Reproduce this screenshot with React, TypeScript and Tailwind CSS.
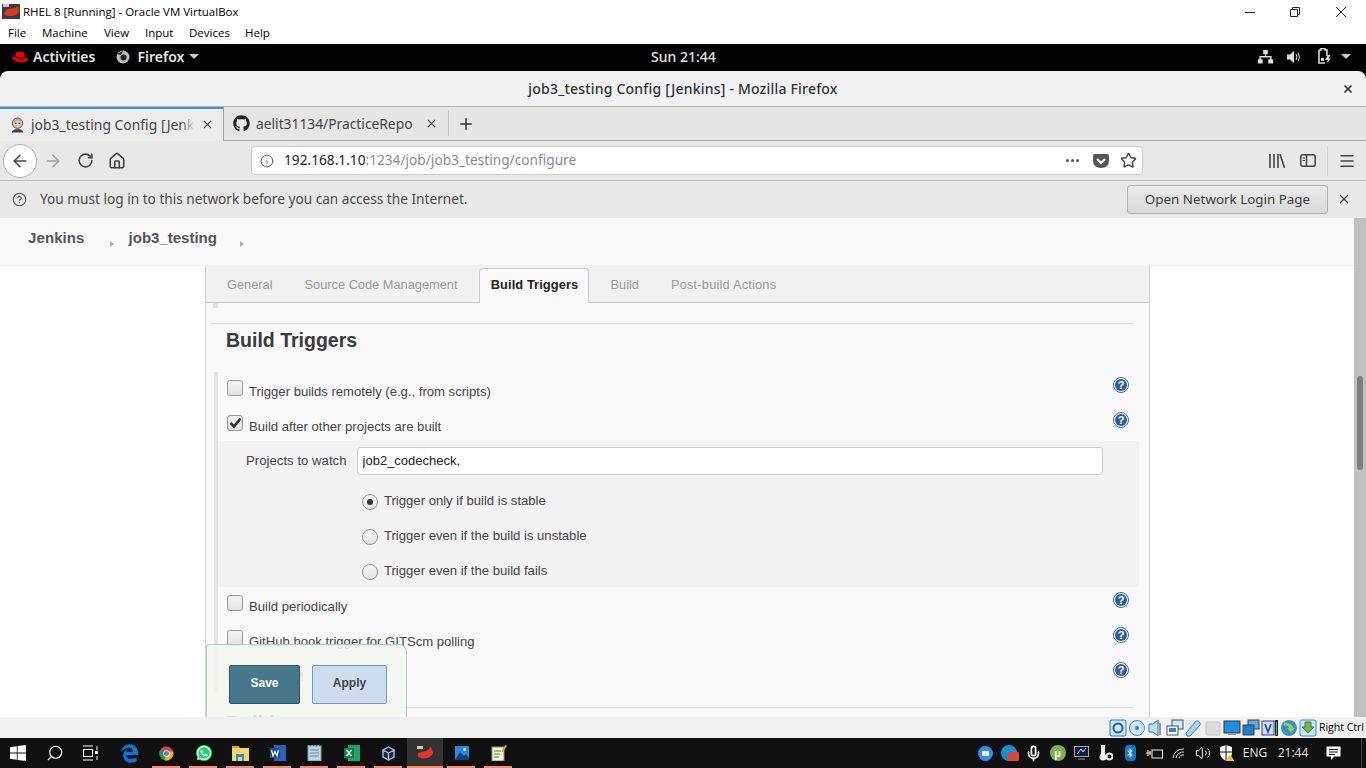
// App.tsx - VirtualBox window showing Jenkins job config in Firefox
import React from 'react';
import { FaGithub, FaWhatsapp, FaBluetoothB, FaEdgeLegacy } from 'react-icons/fa6';
import {
  ArrowLeft, ArrowRight, RotateCw, Home, Info, CircleHelp, X, Plus, Star, Menu,
  Search, Volume2, Mic,
} from 'lucide-react';

const uiFont = "font-['Noto_Sans',sans-serif]";
const winFont = "font-['Open_Sans',sans-serif]";
const pageFont = "font-['Liberation_Sans',sans-serif]";

const RedHat = ({ size = 16 }: { size?: number }) => (
  <svg width={size} height={size * 0.75} viewBox="0 0 16 12">
    <path d="M4 1.5 C5 0 7 1 8.5 1 C10 1 10.5 0.5 11.5 1 L13 6 C15 6.5 16 7.5 16 8.5 C16 10.5 13 11.5 9.5 11.5 C5 11.5 0 8.5 0 6.5 C0 5.5 1.5 5.5 3 6 Z" fill="#e00" />
    <path d="M3 6 C5 7.5 9 9 13 8 L13 6.5 C10 7 6 6.5 3.3 4.8 Z" fill="#200" />
  </svg>
);

const CheckBox = ({ checked = false }: { checked?: boolean }) => (
  <span className="w-[16px] h-[16px] rounded-[3px] border border-[#9a9a9a] bg-gradient-to-b from-[#f4f4f4] to-[#e2e2e2] flex items-center justify-center shrink-0">
    {checked && (
      <svg width="13" height="12" viewBox="0 0 13 12">
        <path d="M1.5 6 L5 9.5 L11.5 1.5" fill="none" stroke="#333" strokeWidth="2.6" />
      </svg>
    )}
  </span>
);

const Radio = ({ checked = false }: { checked?: boolean }) => (
  <span className="w-[16px] h-[16px] rounded-full border border-[#8f8f8f] bg-gradient-to-b from-[#f6f6f6] to-[#e4e4e4] flex items-center justify-center shrink-0">
    {checked && <span className="w-[6px] h-[6px] rounded-full bg-[#333]" />}
  </span>
);

const HelpDot = () => (
  <svg width="16" height="16" viewBox="0 0 16 16" className="shrink-0">
    <circle cx="8" cy="8" r="7.5" fill="#fff" stroke="#3465a4" />
    <circle cx="8" cy="8" r="6" fill="#2f5c9e" />
    <text x="8" y="12" textAnchor="middle" fontSize="11" fontWeight="700" fill="#fff">?</text>
  </svg>
);

// one checkbox row in the triggers list, 35px pitch
const TriggerRow = ({ label, checked }: { label: string; checked?: boolean }) => (
  <div className="h-[35px] flex items-start text-[13.1px] text-[#444]">
    <div className="ml-[9px] mt-[8px]"><CheckBox checked={checked} /></div>
    <span className="ml-[6px] mt-[12px] leading-[15px]">{label}</span>
    <div className="ml-auto mr-[2px] mt-[5px]"><HelpDot /></div>
  </div>
);

const RadioRow = ({ label, checked }: { label: string; checked?: boolean }) => (
  <div className="h-[35px] flex items-center text-[13.1px] text-[#444] ml-[144px]">
    <span className="mt-[2px]"><Radio checked={checked} /></span>
    <span className="ml-[6px]">{label}</span>
  </div>
);

const AppCell = ({ children }: { children: React.ReactNode }) => (
  <div className="w-[37px] h-[30px] flex items-center justify-center shrink-0 relative">
    {children}
    <span className="absolute bottom-0 left-[4px] right-[5px] h-[2px] bg-[#f48a70]" />
  </div>
);

// tray icons sit on an even pitch
const TrayCell = ({ children }: { children: React.ReactNode }) => (
  <div className="w-[24.2px] h-[30px] flex items-center justify-center shrink-0">{children}</div>
);

const VBoxIcon = ({ children }: { children: React.ReactNode }) => (
  <svg width="18" height="18" viewBox="0 0 18 18" className="shrink-0">{children}</svg>
);

export default function App() {
  return (
    <div className="w-[1366px] h-[768px] overflow-hidden flex flex-col bg-white relative">
      {/* VirtualBox title */}
      <div className={`h-[22px] pt-[1px] flex items-center bg-white text-[11.5px] text-black ${winFont}`}>
        <svg width="18" height="17" viewBox="0 0 18 17" className="ml-[2px]">
          <rect x="0" y="1" width="18" height="15" fill="#3b3b3b" />
          <rect x="1" y="1" width="6" height="3" fill="#ccc" />
          <path d="M4 7 C6 5 12 7 16 3 L17 9 C14 14 5 14 2 11 Z" fill="#e33524" />
        </svg>
        <span className="ml-[3px]">RHEL 8 [Running] - Oracle VM VirtualBox</span>
        <div className="ml-auto flex items-center">
          <svg width="10" height="10" viewBox="0 0 10 10" className="mr-[35px]"><path d="M0 5.5 H10" stroke="#222" /></svg>
          <svg width="10" height="10" viewBox="0 0 10 10" className="mr-[36px]">
            <path d="M2.5 2 V0.5 H9.5 V7.5 H7.5 M0.5 2.5 H7.5 V9.5 H0.5 Z" fill="none" stroke="#222" />
          </svg>
          <svg width="10" height="10" viewBox="0 0 10 10" className="mr-[20px]"><path d="M0 0 L10 10 M10 0 L0 10" stroke="#222" /></svg>
        </div>
      </div>
      {/* VirtualBox menu */}
      <div className={`h-[22px] flex items-center pl-[8px] bg-white text-[11.5px] text-black ${winFont}`}>
        <span className="w-[34px]">File</span>
        <span className="w-[62px]">Machine</span>
        <span className="w-[41px]">View</span>
        <span className="w-[44px]">Input</span>
        <span className="w-[56px]">Devices</span>
        <span>Help</span>
      </div>
      {/* GNOME top bar */}
      <div className={`h-[27px] pb-[2px] bg-black flex items-center relative text-[14px] font-semibold text-[#e6e6e6] ${uiFont}`}>
        <div className="ml-[12px]"><RedHat /></div>
        <span className="ml-[5px]">Activities</span>
        <svg width="14" height="14" viewBox="0 0 14 14" className="ml-[21px]">
          <circle cx="7" cy="7" r="6.5" fill="#bbb" />
          <circle cx="7.5" cy="7.5" r="3" fill="#222" />
          <path d="M1 4 L7 1 L5 5 Z" fill="#222" />
        </svg>
        <span className="ml-[7px]">Firefox</span>
        <span className="ml-[5px] w-0 h-0 border-l-[5px] border-r-[5px] border-t-[5px] border-l-transparent border-r-transparent border-t-[#ccc]" />
        <span className="absolute left-[651px] font-medium">Sun 21:44</span>
        <div className="ml-auto flex items-center pr-[15px]">
          <svg width="15" height="15" viewBox="0 0 16 16">
            <path d="M5.5 1 H10.5 V5.5 H8.5 V7.5 H14.5 V11 H16 V15.5 H11 V11 H13 V9 H3 V11 H5 V15.5 H0 V11 H1.5 V7.5 H7.5 V5.5 H5.5 Z" fill="#ddd" />
          </svg>
          <svg width="16" height="16" viewBox="0 0 16 16" className="ml-[13px]">
            <path d="M1 5.5 H4 L8 2 V14 L4 10.5 H1 Z" fill="#ddd" />
            <path d="M10 5 Q12 8 10 11 M12 3.5 Q15 8 12 12.5" fill="none" stroke="#ddd" />
          </svg>
          <svg width="16" height="17" viewBox="0 0 16 17" className="ml-[14px]">
            <path d="M3 2 H5 V0.5 H9 V2 H11 V8 M9 15 H3 V2" fill="none" stroke="#ddd" strokeWidth="1.6" />
            <path d="M5 10 H8 V13 H5 Z M12 7 L9 12 H12 L10 16 L15 10.5 H12.5 L14.5 7 Z" fill="#ddd" />
          </svg>
          <span className="ml-[9px] w-0 h-0 border-l-[5px] border-r-[5px] border-t-[5px] border-l-transparent border-r-transparent border-t-[#ccc]" />
        </div>
      </div>
      {/* Firefox title */}
      <div className="bg-black">
        <div className={`h-[36px] bg-[#f2f2f2] rounded-t-[8px] border-b border-[#b4b4b4] flex items-center justify-center relative text-[14px] font-medium text-[#2e3436] ${uiFont}`}>
          <span className="tracking-[0.2px]">job3_testing Config [Jenkins] - Mozilla Firefox</span>
          <X size={12} strokeWidth={3.5} className="absolute right-[12px] top-[12px] text-[#333]" />
        </div>
      </div>
      {/* Tab strip */}
      <div className={`h-[34px] bg-[#e6e6e5] flex items-stretch border-b border-[#a8a8a8] text-[13.8px] text-[#444] ${uiFont}`}>
        <div className="w-[224px] h-[34px] bg-[#ececec] border-t-2 border-[#3d8fe0] border-r border-r-[#a8a8a8] flex items-center relative">
          <svg width="15" height="17" viewBox="0 0 16 17" className="ml-[10px] shrink-0">
            <circle cx="8" cy="6" r="5.5" fill="#e8c4a8" stroke="#444" />
            <path d="M3 5 C4 0 12 0 13 5 C11 3 5 3 3 5 Z" fill="#aaa" />
            <circle cx="6" cy="6" r="0.8" fill="#333" /><circle cx="10" cy="6" r="0.8" fill="#333" />
            <path d="M2 16 C2 11 14 11 14 16 Z" fill="#345" />
            <path d="M6.5 12 L9.5 12 L8 14 Z" fill="#d33" />
          </svg>
          <span className="ml-[6px] pt-[1px] w-[164px] overflow-hidden whitespace-nowrap relative tracking-[0.05px]">
            job3_testing Config [Jenkins]
            <span className="absolute right-0 top-0 bottom-0 w-[14px] bg-gradient-to-r from-transparent to-[#ececec]" />
          </span>
          <X size={13} strokeWidth={2.2} className="absolute left-[201px] top-[9px] text-[#555]" />
        </div>
        <div className="w-[225px] flex items-center relative border-r border-[#c0c0c0] my-[4px]">
          <FaGithub size={17} className="ml-[9px] text-[#222]" />
          <span className="ml-[6px] pt-[1px]">aelit31134/PracticeRepo</span>
          <X size={13} strokeWidth={2.2} className="absolute left-[201px] top-[6px] text-[#555]" />
        </div>
        <div className="flex items-center ml-[8px]"><Plus size={18} strokeWidth={2} className="text-[#333]" /></div>
      </div>
      {/* Nav bar */}
      <div className={`h-[40px] bg-[#e8e8e7] border-b border-[#bdbdbd] flex items-center relative text-[#444] ${uiFont}`}>
        <div className="ml-[3px] w-[34px] h-[34px] rounded-full bg-white border border-[#b0b0b0] flex items-center justify-center">
          <ArrowLeft size={20} strokeWidth={1.8} />
        </div>
        <ArrowRight size={20} strokeWidth={1.8} className="ml-[6px] text-[#a0a0a0]" />
        <RotateCw size={17} strokeWidth={2.2} className="ml-[14px]" />
        <Home size={18} strokeWidth={2.2} className="ml-[14px]" />
        <div className="ml-[125px] w-[892px] h-[29px] bg-white border border-[#c8c8c8] rounded-[4px] flex items-center">
          <Info size={14} strokeWidth={1.6} className="ml-[8px] text-[#555]" />
          <span className="ml-[10px] text-[13.7px] text-[#1c1c1c]">192.168.1.10<span className="text-[#8a8a8a]">:1234/job/job3_testing/configure</span></span>
          <span className="ml-auto flex gap-[2px] mr-[14px]">
            <i className="w-[3px] h-[3px] rounded-full bg-[#555]" /><i className="w-[3px] h-[3px] rounded-full bg-[#555]" /><i className="w-[3px] h-[3px] rounded-full bg-[#555]" />
          </span>
          <svg width="16" height="14" viewBox="0 0 16 14" className="mr-[11px]">
            <path d="M0 2 Q0 0 2 0 H14 Q16 0 16 2 V6 Q16 14 8 14 Q0 14 0 6 Z" fill="#555" />
            <path d="M4 5 L8 9 L12 5" fill="none" stroke="#fff" strokeWidth="2" />
          </svg>
          <Star size={17} strokeWidth={2} className="mr-[5px] text-[#444]" />
        </div>
        <svg width="16" height="14" viewBox="0 0 16 14" className="ml-[126px]">
          <path d="M1 0 V14 M5 0 V14 M9 0 V14 M11 0 L15.5 14" stroke="#444" strokeWidth="1.6" fill="none" />
        </svg>
        <svg width="16" height="13" viewBox="0 0 16 13" className="ml-[15px]">
          <rect x="0.8" y="0.8" width="14.4" height="11.4" rx="2" fill="none" stroke="#444" strokeWidth="1.5" />
          <path d="M6.5 1 V12" stroke="#444" strokeWidth="1.5" />
          <path d="M2.5 4 H5 M2.5 6.5 H5" stroke="#444" />
        </svg>
        <span className="ml-[11px] w-px h-[30px] bg-[#d4d4d4]" />
        <Menu size={18} strokeWidth={2} className="ml-[10px] text-[#444]" />
      </div>
      {/* Captive portal notification */}
      <div className={`h-[37px] pb-[1px] bg-[#e8e8e7] flex items-center text-[13.65px] text-[#4a4a4a] ${uiFont}`}>
        <CircleHelp size={15} strokeWidth={1.7} className="ml-[12px]" />
        <span className="ml-[13px]">You must log in to this network before you can access the Internet.</span>
        <button className="ml-auto w-[201px] h-[29px] rounded-[3px] border border-[#b0b0b0] bg-gradient-to-b from-[#ececec] to-[#d8d8d8] text-[13.4px] text-[#3c3c3c]">
          Open Network Login Page
        </button>
        <X size={14} strokeWidth={2.2} className="ml-[9px] mr-[15px] text-[#444]" />
      </div>
      {/* Page viewport */}
      <div className={`h-[499px] flex relative overflow-hidden bg-white ${pageFont}`}>
        <div className="flex-1 flex flex-col min-w-0">
          <div className="h-[48px] bg-[#f9f9f9] border-b border-[#eeeeee] flex items-center text-[15px] font-bold text-[#555] shrink-0">
            <span className="ml-[28px] mb-[6px] tracking-[0.1px]">Jenkins</span>
            <span className="ml-[25px] mt-[5px] w-0 h-0 border-l-[4px] border-y-[3px] border-y-transparent border-l-[#aaa]" />
            <span className="ml-[15px] mb-[6px]">job3_testing</span>
            <span className="ml-[23px] mt-[5px] w-0 h-0 border-l-[4px] border-y-[3px] border-y-transparent border-l-[#aaa]" />
          </div>
          {/* Form panel */}
          <div className="ml-[205px] w-[945px] flex-1 border-x border-[#d0d0d0] bg-[#f9f9f9] overflow-hidden">
            <div className="h-[37px] bg-[#f1f1f1] border-b border-[#c8c8c8] flex text-[12.8px] text-[#999] relative">
              <span className="ml-[21px] mt-[9px]">General</span>
              <span className="ml-[32px] mt-[9px]">Source Code Management</span>
              <span className="ml-[22px] mt-[2px] w-[110px] h-[35px] bg-[#f9f9f9] border border-b-0 border-[#cccccc] rounded-t-[4px] text-center pt-[6px] font-bold text-[#222] z-10 tracking-[0.1px]">Build Triggers</span>
              <span className="ml-[21px] mt-[9px]">Build</span>
              <span className="ml-[32px] mt-[9px] tracking-[0.2px]">Post-build Actions</span>
            </div>
            <div className="ml-[7px] w-[5px] h-[5px] bg-[#e4e4e4]" />
            <div className="mx-[5px] w-[922px] mt-[15px] border-t border-[#e0e0e0]" />
            <h2 className="ml-[20px] mt-[4px] text-[19.5px] leading-[24px] font-bold text-[#3a3a3a]">Build Triggers</h2>
            <div className="ml-[8px] mt-[20px] w-[925px] border-l-4 border-[#e4e4e4] h-[320px]">
              <div className="mr-[8px]">
                <TriggerRow label="Trigger builds remotely (e.g., from scripts)" />
                <TriggerRow label="Build after other projects are built" checked />
              </div>
              <div className="h-[146px] -mt-[1px] bg-[#f3f3f3]">
                <div className="flex items-start pt-[6px] h-[41px] text-[13.1px] text-[#444]">
                  <span className="ml-[28px] mt-[4px] tracking-[0.05px]">Projects to watch</span>
                  <input readOnly value="job2_codecheck," className="ml-[10px] w-[746px] h-[28px] bg-white border border-[#ccc] rounded-[3px] px-[5px] pb-[1px] text-[13px] text-[#222] outline-none" />
                </div>
                <div className="pt-[1px]">
                  <RadioRow label="Trigger only if build is stable" checked />
                  <RadioRow label="Trigger even if the build is unstable" />
                  <RadioRow label="Trigger even if the build fails" />
                </div>
              </div>
              <div className="mr-[8px]">
                <TriggerRow label="Build periodically" />
                <TriggerRow label="GitHub hook trigger for GITScm polling" />
                <TriggerRow label="Poll SCM" />
              </div>
            </div>
            <div className="mx-[5px] w-[922px] mt-[15px] border-t border-[#e0e0e0]" />
            <h2 className="ml-[20px] mt-[3px] text-[19.5px] leading-[24px] font-bold text-[#3a3a3a]">Build</h2>
          </div>
        </div>
        {/* Page scrollbar */}
        <div className="w-[12px] bg-[#c0c0c0] relative shrink-0">
          <span className="absolute left-[3px] top-[158px] w-[6px] h-[94px] rounded-full bg-[#7d8080]" />
        </div>
        {/* Sticky save bar sits on top of the form */}
        <div className="absolute left-[206px] top-[426px] w-[201px] h-[74px] bg-[#f4f8f0]/85 border border-b-0 border-[#a4d4b8] rounded-tr-[8px] rounded-tl-[4px]">
          <button className="absolute left-[22px] top-[20px] w-[71px] h-[39px] pb-[3px] rounded-[2px] bg-[#47778a] border border-[#2c5566] text-white text-[12px] font-bold">Save</button>
          <button className="absolute left-[105px] top-[20px] w-[75px] h-[39px] pb-[3px] rounded-[2px] bg-[#cddded] border border-[#6c9bd2] text-[#444] text-[12px] font-bold">Apply</button>
        </div>
      </div>
      {/* VirtualBox status bar */}
      <div className={`h-[21px] bg-[#f0f0f0] flex items-center justify-end text-black ${winFont}`}>
        <div className="flex items-center gap-[1px] mr-[2px]">
          <VBoxIcon><rect x="1" y="1" width="16" height="16" rx="2" fill="#cfe4f7" stroke="#2b7fc4" /><circle cx="9" cy="9" r="4.5" fill="none" stroke="#2b5f90" strokeWidth="2" /></VBoxIcon>
          <VBoxIcon><circle cx="9" cy="9" r="7.5" fill="#cfe4f7" stroke="#3b8ed0" /><circle cx="9" cy="9" r="2" fill="#2b7fc4" /></VBoxIcon>
          <VBoxIcon><path d="M2 5 H6 L11 1 V17 L6 13 H2 Z" fill="#bfe0f7" stroke="#2b7fc4" /><path d="M13 4 V16" stroke="#999" strokeWidth="2" /></VBoxIcon>
          <VBoxIcon><rect x="6" y="1" width="11" height="9" fill="#cfe4f7" stroke="#456" /><rect x="1" y="7" width="11" height="9" fill="#fff" stroke="#456" /><rect x="3" y="9" width="7" height="4" fill="#2b8ad8" /></VBoxIcon>
          <VBoxIcon><path d="M1 14 L11 2 C13 1 16 4 15 6 L5 17 L2 17 Z" fill="#a8d4f5" stroke="#2b7fc4" /></VBoxIcon>
          <VBoxIcon><rect x="2" y="3" width="14" height="13" rx="1" fill="#dcdcdc" stroke="#c4c4c4" /></VBoxIcon>
          <VBoxIcon><rect x="1" y="2" width="16" height="12" fill="#1e90e0" stroke="#333" /><rect x="5" y="14" width="8" height="2" fill="#999" /></VBoxIcon>
          <VBoxIcon><rect x="6" y="1" width="11" height="9" fill="#6aa8dc" stroke="#345" /><rect x="1" y="6" width="11" height="10" fill="#1e80d0" stroke="#345" /></VBoxIcon>
          <VBoxIcon><rect x="1" y="2" width="12" height="14" fill="#cfdcf7" stroke="#2b3fa4" /><path d="M4 5 L7 13 L10 5" fill="none" stroke="#2b3fa4" strokeWidth="1.6" /><rect x="14" y="1" width="3" height="16" fill="#222" /><rect x="15" y="3" width="1" height="13" fill="#3c3" /></VBoxIcon>
          <VBoxIcon><circle cx="9" cy="9" r="8" fill="#3a8ed0" /><path d="M4 4 C8 3 13 6 13 9 L15 9 L11 14 L7 9 L9 9 C9 7 6 6 4 7 Z" fill="#8fd14f" /></VBoxIcon>
          <VBoxIcon><rect x="1" y="1" width="16" height="16" rx="2" fill="#cfe4f7" stroke="#3b8ed0" /><path d="M6 3 H12 V8 H15 L9 14 L3 8 H6 Z" fill="#6cc04a" stroke="#3a8020" /></VBoxIcon>
        </div>
        <span className="mr-[2px] text-[10.5px]">Right Ctrl</span>
      </div>
      {/* Windows taskbar */}
      <div className={`h-[30px] bg-[#101010] flex items-center text-[12px] text-[#e8e8e8] ${winFont}`}>
        <svg width="16" height="16" viewBox="0 0 16 16" className="ml-[10px]">
          <path d="M0 2.2 L6.8 1.2 V7.6 H0 Z M7.6 1.1 L16 0 V7.6 H7.6 Z M0 8.4 H6.8 V14.8 L0 13.8 Z M7.6 8.4 H16 V16 L7.6 14.9 Z" fill="#fff" />
        </svg>
        <Search size={18} strokeWidth={1.5} className="ml-[20px] text-white -scale-x-100" />
        <svg width="16" height="16" viewBox="0 0 16 16" className="ml-[18px]">
          <path d="M1 1 H11 M1 15 H11 M15 1 V5 M15 11 V15" stroke="#fff" fill="none" />
          <rect x="1.5" y="4.5" width="9" height="7" fill="none" stroke="#fff" />
          <rect x="13" y="6" width="3" height="3" fill="#fff" />
        </svg>
        <div className="w-[13px]" />
        <div className="w-[37px] h-[30px] flex items-center justify-center"><FaEdgeLegacy size={19} className="text-[#0a78d4]" /></div>
        <AppCell>
          <svg width="15" height="15" viewBox="0 0 16 16">
            <circle cx="8" cy="8" r="7.5" fill="#db4437" />
            <path d="M8 8 L1.5 4 A7.5 7.5 0 0 0 6 15.2 Z" fill="#0f9d58" />
            <path d="M8 8 L6 15.2 A7.5 7.5 0 0 0 15 6 L8 5 Z" fill="#f4b400" />
            <circle cx="8" cy="8" r="3.6" fill="#fff" /><circle cx="8" cy="8" r="2.7" fill="#4285f4" />
          </svg>
        </AppCell>
        <AppCell>
          <span className="w-[16px] h-[16px] rounded-full bg-[#25d366] flex items-center justify-center"><FaWhatsapp size={16} className="text-white" /></span>
        </AppCell>
        <AppCell>
          <svg width="17" height="15" viewBox="0 0 17 15">
            <path d="M0 0 H7 L8 2 H0 Z" fill="#e0a020" />
            <rect x="0" y="2" width="17" height="13" fill="#f8d56c" />
            <path d="M4 15 V8 H12 V15 H10 V11 H6 V15 Z" fill="#2b8ad8" />
          </svg>
        </AppCell>
        <AppCell>
          <svg width="16" height="16" viewBox="0 0 16 16">
            <rect x="4" y="0" width="12" height="16" fill="#2b62b8" />
            <rect x="0" y="3" width="10" height="10" fill="#1a4a9c" />
            <path d="M1.5 5 L3 11 L5 6.5 L7 11 L8.5 5" fill="none" stroke="#fff" strokeWidth="1.2" />
          </svg>
        </AppCell>
        <AppCell>
          <svg width="15" height="16" viewBox="0 0 15 16">
            <rect x="1" y="1" width="13" height="15" fill="#bcd6e4" stroke="#8a9aa0" />
            <path d="M3 5 H12 M3 8 H12 M3 11 H12" stroke="#6a8a9a" />
            <path d="M2 0 V2 M5 0 V2 M8 0 V2 M11 0 V2" stroke="#ccc" />
          </svg>
        </AppCell>
        <AppCell>
          <svg width="16" height="16" viewBox="0 0 16 16">
            <rect x="4" y="0" width="12" height="16" fill="#21a366" />
            <rect x="0" y="3" width="10" height="10" fill="#107c41" />
            <path d="M2.5 5 L7.5 11 M7.5 5 L2.5 11" stroke="#fff" strokeWidth="1.4" />
          </svg>
        </AppCell>
        <AppCell>
          <svg width="13" height="15" viewBox="0 0 13 15">
            <path d="M6.5 1 L12 4 V11 L6.5 14 L1 11 V4 Z M1 4 L6.5 7 L12 4 M6.5 7 V14" fill="#18243a" stroke="#9cc4e8" strokeWidth="1.4" />
          </svg>
        </AppCell>
        <div className="w-[36px] h-[30px] bg-[#333333] flex items-center justify-center relative">
          <svg width="17" height="15" viewBox="0 0 17 15">
            <rect x="0" y="0" width="6" height="3" fill="#ccc" />
            <path d="M1 7 C4 6 10 6 14 1 L16 7 C14 13 4 14 1 10 Z" fill="#e33524" />
          </svg>
          <span className="absolute bottom-0 left-0 right-0 h-[2px] bg-[#f48a70]" />
        </div>
        <AppCell>
          <svg width="14" height="14" viewBox="0 0 14 14">
            <rect width="14" height="14" fill="#2b8ad8" />
            <path d="M0 14 L5 6 L9 10 L11 8 L14 12 V14 Z" fill="#13407c" />
            <circle cx="9.5" cy="3.5" r="1.3" fill="#fff" />
          </svg>
        </AppCell>
        <AppCell>
          <svg width="16" height="16" viewBox="0 0 16 16">
            <rect x="1" y="2" width="12" height="14" fill="#f4f4e0" stroke="#888" />
            <path d="M3 6 H10 M3 9 H9 M3 12 H8" stroke="#7ab648" strokeWidth="1.4" />
            <path d="M11 7 L15 0.5" stroke="#e8a020" strokeWidth="2" />
          </svg>
        </AppCell>
        {/* system tray */}
        <div className="ml-auto flex items-center h-[30px]">
          <TrayCell>
            <span className="w-[15px] h-[15px] rounded-full bg-[#2d8cff] flex items-center justify-center">
              <span className="w-[7px] h-[5px] rounded-[1px] bg-white" />
            </span>
          </TrayCell>
          <TrayCell>
            <span className="relative w-[16px] h-[16px] rounded-full bg-[#1a8fd0]">
              <span className="absolute right-[-2px] bottom-0 w-[11px] h-[9px] rounded-[1px] bg-[#e04040]" />
            </span>
          </TrayCell>
          <TrayCell><Mic size={17} strokeWidth={2.4} className="text-white" /></TrayCell>
          <TrayCell>
            <span className="w-[16px] h-[16px] rounded-full bg-[#77b255] flex items-center justify-center text-white text-[10px] font-bold leading-none">µ</span>
          </TrayCell>
          <TrayCell>
            <svg width="15" height="14" viewBox="0 0 15 14">
              <rect x="0.5" y="0.5" width="14" height="10" fill="#102040" stroke="#aaa" />
              <path d="M3 8 L7 3 L9 6 L12 2" stroke="#cde" fill="none" />
              <path d="M4 13 H11" stroke="#999" />
            </svg>
          </TrayCell>
          <TrayCell>
            <svg width="15" height="16" viewBox="0 0 15 16">
              <path d="M3 0 H7 V10 H3 Z" fill="#eee" />
              <circle cx="5" cy="12" r="3.5" fill="#eee" />
              <circle cx="11.5" cy="11.5" r="3" fill="none" stroke="#eee" strokeWidth="2" />
            </svg>
          </TrayCell>
          <TrayCell>
            <span className="w-[11px] h-[16px] rounded-[4px] bg-[#0a78d4] flex items-center justify-center"><FaBluetoothB size={10} className="text-white" /></span>
          </TrayCell>
          <TrayCell>
            <svg width="17" height="11" viewBox="0 0 17 11">
              <rect x="6" y="2" width="10.5" height="8" fill="none" stroke="#eee" />
              <path d="M0 5 H5 M2 2 V8 M4 3 V7" stroke="#eee" />
            </svg>
          </TrayCell>
          <TrayCell>
            <svg width="13" height="12" viewBox="0 0 13 12">
              <path d="M1 11 A10 10 0 0 1 12 2 M4 11 A7 7 0 0 1 12 5 M7 11 A4 4 0 0 1 12 8" fill="none" stroke="#ddd" />
            </svg>
          </TrayCell>
          <TrayCell><Volume2 size={16} strokeWidth={1.4} className="text-white" /></TrayCell>
          <TrayCell>
            <svg width="15" height="16" viewBox="0 0 15 16">
              <path d="M7 0 L13 2 V8 C13 12 9 15 7 16 C5 15 1 12 1 8 V2 Z" fill="#fff" />
              <path d="M7 0 V16 M1 7 H13" stroke="#111" />
              <path d="M11 9 L15.5 16 H7 Z" fill="#f5c518" />
            </svg>
          </TrayCell>
          <span className="w-[32px] text-center">ENG</span>
          <span className="w-[44px] text-center">21:44</span>
          <span className="w-[36px] flex justify-center">
            <svg width="15" height="15" viewBox="0 0 15 15">
              <path d="M0.5 0.5 H14.5 V10.5 H8 L5 14 V10.5 H0.5 Z" fill="#fff" />
              <path d="M3 3.5 H12 M3 6 H12 M3 8.5 H9" stroke="#111" />
            </svg>
          </span>
          <span className="ml-[10px] w-px h-[30px] bg-[#444]" />
          <span className="w-[4px]" />
        </div>
      </div>
    </div>
  );
}
